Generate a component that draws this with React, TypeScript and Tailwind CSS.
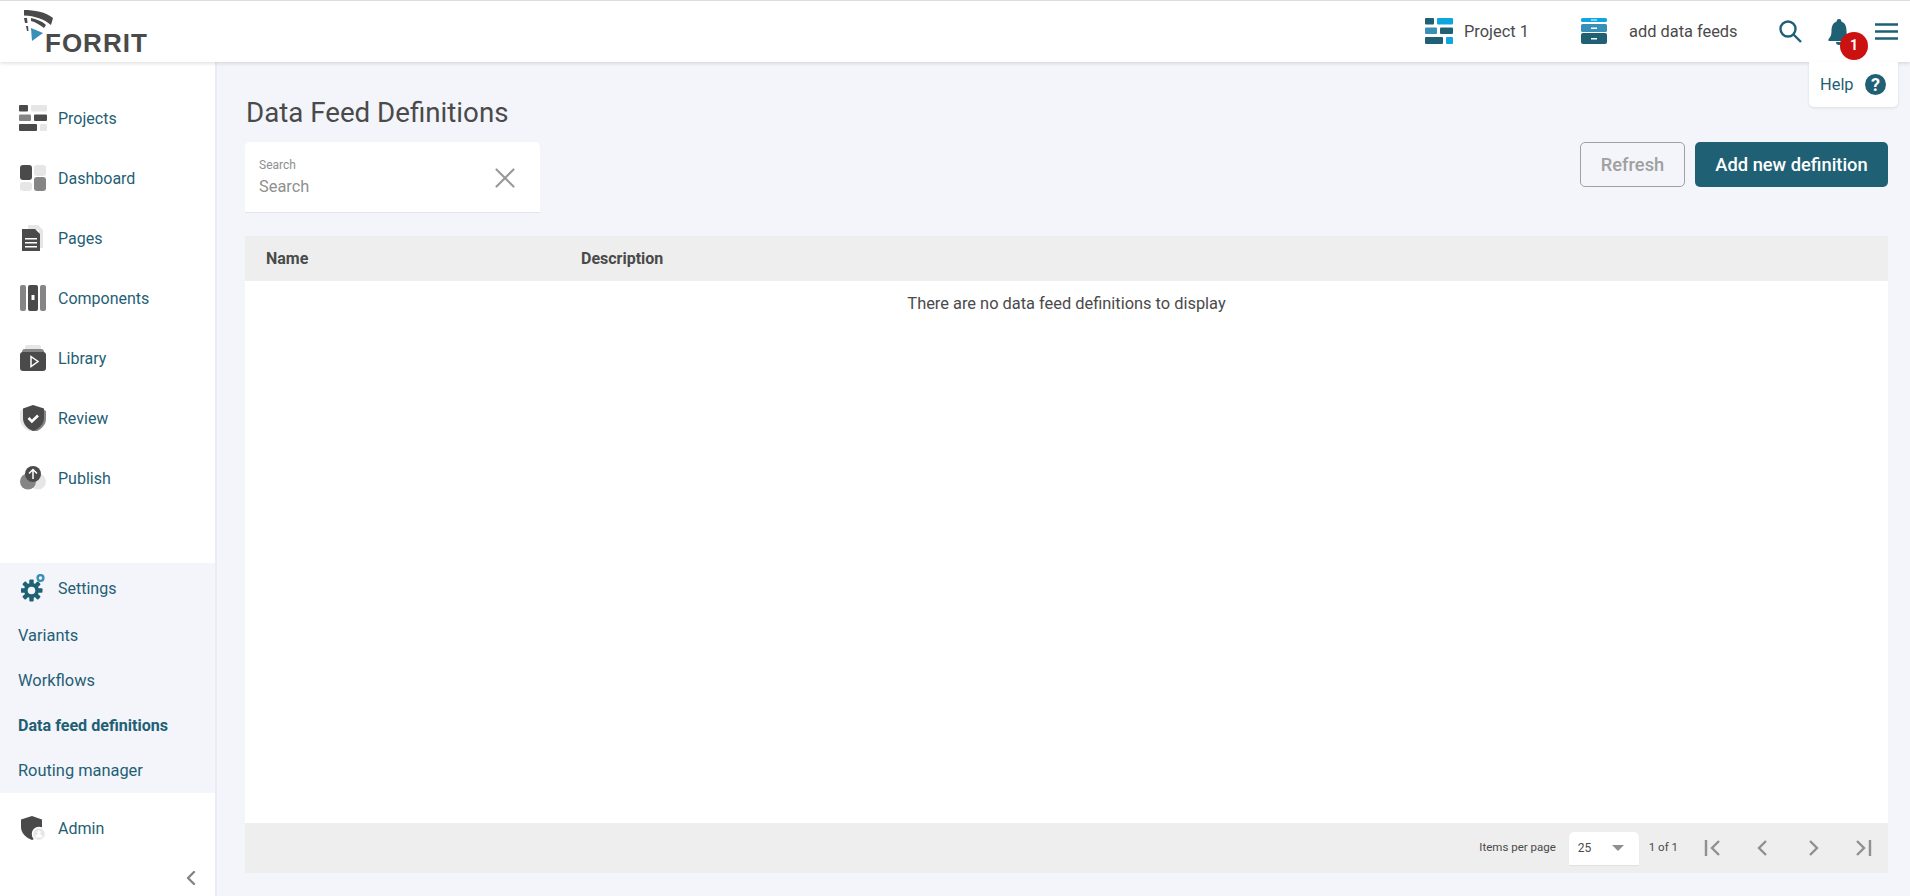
import { ChevronLeft, X } from "lucide-react";
import type { ReactNode } from "react";

const DARK = "#4a4a4a";
const MID = "#858585";
const LIGHT = "#e6e6e6";
const TEAL = "#1f6075";
const BLUE = "#3a8fb7";
const SKY = "#0ea5e0";

function BricksIcon({ a, b, d }: { a: string; b: string; d: string }) {
  return (
    <svg width="28" height="26" viewBox="0 0 28 26">
      <rect x="0" y="0" width="9" height="6.500" rx="1" fill={a} />
      <rect x="12" y="0" width="16" height="6.500" rx="1" fill={d} />
      <rect x="0" y="9.500" width="12" height="6.500" rx="1" fill={b} />
      <rect x="15" y="9.500" width="13" height="6.500" rx="1" fill={a} />
      <rect x="0" y="19" width="18" height="7" rx="1" fill={a} />
      <rect x="21" y="19" width="7" height="7" rx="1" fill={d} />
    </svg>
  );
}

function DashboardIcon() {
  return (
    <svg width="26" height="26" viewBox="0 0 26 26">
      <rect x="0" y="0" width="12" height="15" rx="3" fill={DARK} />
      <rect x="14" y="0" width="12" height="11" rx="3" fill={LIGHT} />
      <rect x="0" y="17" width="12" height="9" rx="3" fill={LIGHT} />
      <rect x="14" y="12" width="12" height="14" rx="3" fill={MID} />
    </svg>
  );
}

function PagesIcon() {
  return (
    <svg width="22" height="26" viewBox="0 0 22 26">
      <path d="M6 0h10l5 5v18h-4V5H6z" fill={LIGHT} />
      <path d="M0 4h13l5 5v17H0z" fill={DARK} />
      <path d="M3 13h12v1.600H3zM3 17h12v1.600H3zM3 21h12v1.600H3z" fill="#fff" />
    </svg>
  );
}

function ComponentsIcon() {
  return (
    <svg width="26" height="26" viewBox="0 0 26 26">
      <rect x="0" y="0" width="6" height="26" rx="2" fill={MID} />
      <rect x="8" y="0" width="10" height="26" rx="2" fill={DARK} />
      <rect x="20" y="0" width="6" height="26" rx="2" fill={MID} />
      <rect x="11.500" y="10" width="3" height="5" fill="#fff" />
    </svg>
  );
}

function LibraryIcon() {
  return (
    <svg width="26" height="26" viewBox="0 0 26 26">
      <path d="M5 2a2 2 0 0 1 2-2h12a2 2 0 0 1 2 2v3H5z" fill={LIGHT} />
      <path d="M2 7a3 3 0 0 1 3-3h16a3 3 0 0 1 3 3v2H2z" fill={MID} />
      <rect x="0" y="7" width="26" height="19" rx="3" fill={DARK} />
      <path d="M11 11.500l7 5-7 5z" fill="none" stroke="#fff" strokeWidth="1.500" />
    </svg>
  );
}

function ReviewIcon() {
  return (
    <svg width="26" height="26" viewBox="0 0 26 26">
      <path d="M3 4L0 6v8c0 6 5 10 9 12h4V4z" fill={LIGHT} />
      <path d="M13 4h9l4 2v8c0 6-5 10-9 12h-4z" fill={MID} />
      <path d="M13 0l11 3.500V13c0 6-5 11-11 13C7 24 3 19 3 13V3.500z" fill={DARK} />
      <path d="M8.500 13l3.400 3.400L18 10.500" fill="none" stroke="#fff" strokeWidth="2.600" />
    </svg>
  );
}

function PublishIcon() {
  return (
    <svg width="26" height="24" viewBox="0 0 26 24">
      <circle cx="18" cy="15.500" r="8" fill={LIGHT} />
      <circle cx="8" cy="15.500" r="8" fill={MID} />
      <circle cx="13" cy="8" r="8" fill={DARK} />
      <path d="M13 13V3.500M9 7.500l4-4 4 4" fill="none" stroke="#fff" strokeWidth="1.500" />
    </svg>
  );
}

function GearIcon() {
  return (
    <svg width="24" height="28" viewBox="0 0 24 28">
      <g fill={TEAL}>
        <circle cx="10.500" cy="16.500" r="7.500" />
        {[0, 45, 90, 135, 180, 225, 270, 315].map((r) => (
          <rect key={r} x="8.300" y="5.500" width="4.400" height="5" rx="1" transform={`rotate(${r} 10.500 16.500)`} />
        ))}
      </g>
      <circle cx="10.500" cy="16.500" r="3.800" fill="#f3f5fa" />
      <circle cx="19.500" cy="4" r="2.900" fill="none" stroke={BLUE} strokeWidth="2.400" />
    </svg>
  );
}

function AdminIcon() {
  return (
    <svg width="24" height="24" viewBox="0 0 24 24">
      <path d="M11 0l10 3.500V11c0 6-4.500 11-10 13C5 22 0 17 0 11V3.500z" fill={DARK} />
      <circle cx="18" cy="18" r="6.500" fill={LIGHT} stroke="#fff" strokeWidth="1.500" />
      <circle cx="18" cy="16.300" r="1.800" fill="#fff" />
      <path d="M14.500 21.500a3.500 3.500 0 0 1 7 0z" fill="#fff" />
    </svg>
  );
}

function DrawerIcon() {
  return (
    <svg width="26" height="26" viewBox="0 0 26 26">
      <rect x="0" y="0" width="26" height="4" rx="1.500" fill={SKY} />
      <rect x="0" y="6" width="26" height="8" rx="1.500" fill={BLUE} />
      <rect x="0" y="15" width="26" height="11" rx="2" fill={TEAL} />
      <rect x="10" y="1.500" width="6" height="1" fill="#fff" />
      <rect x="10" y="9.500" width="6" height="1.500" fill="#fff" />
      <rect x="10" y="20" width="6" height="1.500" fill="#fff" />
    </svg>
  );
}

function Logo() {
  return (
    <div className="relative h-full w-[215px]">
      <svg className="absolute left-[23px] top-[8px]" width="32" height="33" viewBox="0 0 32 33">
        <path d="M1 1C11 1 23 3 30 9l-2 7C21 10 12 7 1 6.500z" fill={DARK} />
        <path d="M8 9c5 1 11 3 15 7l-2 3c-4-3-9-6-13-7z" fill={DARK} />
        <path d="M1 9h3l.500 5H2zM3 17h2l.500 5H4z" fill={DARK} />
        <path d="M8 19l12 5-11 8z" fill={BLUE} />
      </svg>
      <span className="absolute left-[45px] top-[26px] font-['Liberation_Sans'] text-[26px] font-bold leading-[32px] tracking-[1px] text-[#4a4a4a]">
        FORRIT
      </span>
    </div>
  );
}

function NavItem({ icon, label }: { icon: ReactNode; label: string }) {
  return (
    <div className="flex h-[60px] items-center">
      <span className="flex w-[58px] shrink-0 justify-center pl-[8px]">{icon}</span>
      <span className="pt-[2px] text-[16px] text-[#1f6075]">{label}</span>
    </div>
  );
}

function SubItem({ label, active }: { label: string; active?: boolean }) {
  return (
    <div
      className={`flex h-[45px] items-center pl-[18px] pt-[2px] text-[#1f6075] ${
        active ? "text-[16.100px] font-bold" : "text-[16.400px]"
      }`}
    >
      {label}
    </div>
  );
}

function Sidebar() {
  return (
    <aside className="flex w-[217px] shrink-0 flex-col border-r-2 border-[#e9ebf5] bg-white pt-[26px]">
      <NavItem icon={<BricksIcon a={DARK} b={MID} d={LIGHT} />} label="Projects" />
      <NavItem icon={<DashboardIcon />} label="Dashboard" />
      <NavItem icon={<PagesIcon />} label="Pages" />
      <NavItem icon={<ComponentsIcon />} label="Components" />
      <NavItem icon={<LibraryIcon />} label="Library" />
      <NavItem icon={<ReviewIcon />} label="Review" />
      <NavItem icon={<PublishIcon />} label="Publish" />
      <div className="mt-[55px] h-[230px] bg-[#f3f5fa]">
        <div className="flex h-[50px] items-center">
          <span className="flex w-[58px] shrink-0 justify-center pl-[8px]">
            <GearIcon />
          </span>
          <span className="pt-[2px] text-[16px] text-[#1f6075]">Settings</span>
        </div>
        <SubItem label="Variants" />
        <SubItem label="Workflows" />
        <SubItem label="Data feed definitions" active />
        <SubItem label="Routing manager" />
      </div>
      <div className="mt-[5px]">
        <NavItem icon={<AdminIcon />} label="Admin" />
      </div>
      <div className="flex justify-end pr-[12px] pt-[8px]">
        <ChevronLeft size={24} strokeWidth={2.400} color="#858585" />
      </div>
    </aside>
  );
}

function Header() {
  return (
    <header className="relative z-10 flex h-[61px] shrink-0 items-center bg-white shadow-[0_1px_4px_rgba(0,0,0,0.15)]">
      <Logo />
      <div className="ml-auto flex items-center text-[16.400px] text-[#4a4a4a]">
        <BricksIcon a={TEAL} b={BLUE} d={SKY} />
        <span className="ml-[11px] w-[117px] pt-[2px]">Project 1</span>
        <DrawerIcon />
        <span className="ml-[22px] w-[150px] pt-[2px]">add data feeds</span>
      </div>
      <svg className="mr-[26px]" width="23" height="23" viewBox="0 0 23 23">
        <circle cx="9" cy="9" r="7.500" fill="none" stroke={TEAL} strokeWidth="2.400" />
        <path d="M14.500 14.500L22 22" stroke={TEAL} strokeWidth="2.400" />
      </svg>
      <div className="relative mr-[25px] h-[26px] w-[22px]">
        <svg width="22" height="26" viewBox="0 0 22 26">
          <path d="M11 0a2.300 2.300 0 0 1 2.300 2.500C17.500 4 18.500 8 18.500 12c0 4 1 6 3 8v2H.500v-2c2-2 3-4 3-8 0-4 1-8 5.200-9.500A2.300 2.300 0 0 1 11 0zM8 23h6a3 3 0 0 1-6 0z" fill={TEAL} />
        </svg>
        <span className="absolute left-[12px] top-[13px] flex h-[28px] w-[28px] items-center justify-center rounded-full bg-[#cc1111] text-[14px] font-bold text-white">
          1
        </span>
      </div>
      <svg className="mr-[12px]" width="23" height="17" viewBox="0 0 23 17">
        <path d="M0 1.500h23M0 8.500h23M0 15.500h23" stroke={TEAL} strokeWidth="2.600" />
      </svg>
      <div className="absolute right-[12px] top-[61px] flex h-[45px] w-[89px] items-center justify-between rounded-b-[5px] bg-white pl-[11px] pr-[12px] text-[16.400px] text-[#1f6075] shadow-[0_1px_3px_rgba(0,0,0,0.1)]">
        <span className="pt-[2px]">Help</span>
        <span className="flex h-[21px] w-[21px] items-center justify-center rounded-full bg-[#1f6075] text-[18px] font-bold text-white">
          ?
        </span>
      </div>
    </header>
  );
}

function PagerIcon({ d }: { d: string }) {
  return (
    <span className="flex w-[50px] justify-center">
      <svg width="18" height="16" viewBox="0 0 18 16">
        <path d={d} fill="none" stroke="#909090" strokeWidth="2.400" />
      </svg>
    </span>
  );
}

function Content() {
  return (
    <main className="flex min-w-0 flex-1 flex-col bg-[#f3f5fa] pb-[23px] pl-[28px] pr-[22px]">
      <h1 className="flex h-[80px] items-center pl-[1px] pt-[22px] text-[27.700px] leading-none text-[#4a4a4a]">
        Data Feed Definitions
      </h1>
      <div className="flex items-start justify-between">
        <div className="relative h-[71px] w-[295px] rounded-t-[5px] border-b border-[#e4e4e4] bg-white pl-[14px] pt-[16px]">
          <div className="text-[12px] leading-[14px] text-[#8f8f8f]">Search</div>
          <div className="mt-[3px] text-[16.400px] leading-[24px] text-[#8f8f8f]">Search</div>
          <X size={34} strokeWidth={1.500} color="#9a9a9a" className="absolute right-[18px] top-[19px]" />
        </div>
        <div className="flex gap-[10px]">
          <button className="h-[45px] w-[105px] rounded-[5px] border border-[#a0a0a0] pt-[1px] text-[18.300px] font-medium text-[#a0a0a0]">
            Refresh
          </button>
          <button className="h-[45px] w-[193px] rounded-[5px] bg-[#1f6075] pt-[1px] text-[18.300px] font-medium text-white">
            Add new definition
          </button>
        </div>
      </div>
      <div className="mt-[23px] flex min-h-0 flex-1 flex-col bg-white">
        <div className="flex h-[45px] shrink-0 items-center bg-[#eeeeee] pl-[21px] text-[16px] font-bold text-[#4a4a4a]">
          <span className="w-[315px]">Name</span>
          <span>Description</span>
        </div>
        <div className="flex-1 pt-[11px] text-center text-[16.400px] leading-[24px] text-[#4a4a4a]">
          There are no data feed definitions to display
        </div>
        <div className="flex h-[50px] shrink-0 items-center justify-end bg-[#eeeeee] text-[11.500px] text-[#4a4a4a]">
          <span>Items per page</span>
          <div className="ml-[13px] flex h-[33px] w-[70px] items-center justify-between rounded-t-[5px] bg-white pl-[9px] pr-[15px] text-[12px] shadow-[0_1px_1px_rgba(0,0,0,0.06)]">
            25
            <span className="h-0 w-0 border-x-[6px] border-t-[6px] border-x-transparent border-t-[#8f8f8f]" />
          </div>
          <span className="ml-[10px] mr-[10px]">1 of 1</span>
          <PagerIcon d="M2 0v16M15 1L8 8l7 7" />
          <PagerIcon d="M12 1L5 8l7 7" />
          <PagerIcon d="M6 1l7 7-7 7" />
          <PagerIcon d="M3 1l7 7-7 7M16 0v16" />
        </div>
      </div>
    </main>
  );
}

export default function App() {
  return (
    <div className="flex h-[896px] w-full flex-col overflow-hidden border-t border-[#dddddd] bg-white font-['Roboto',sans-serif]">
      <Header />
      <div className="flex min-h-0 flex-1">
        <Sidebar />
        <Content />
      </div>
    </div>
  );
}
